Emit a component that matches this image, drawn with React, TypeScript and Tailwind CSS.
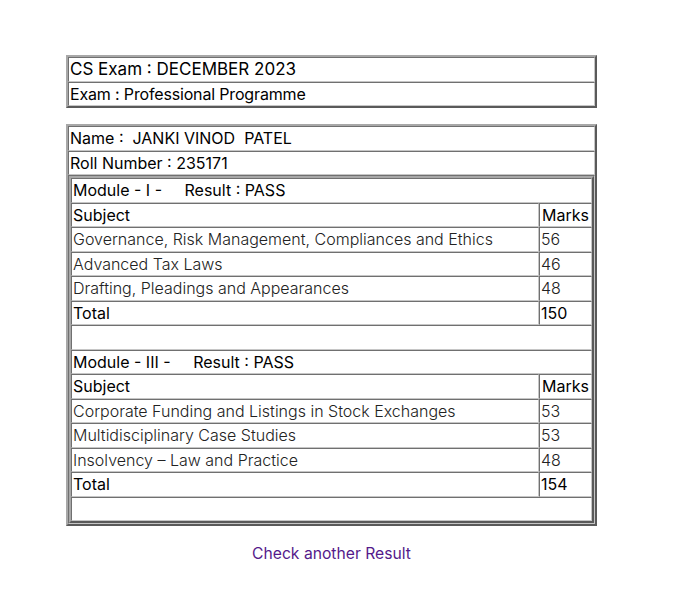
const cell =
	"border border-t-[#707070] border-l-[#707070] border-r-[#c6c6c6] border-b-[#c6c6c6] p-0 px-[1px] text-left align-middle leading-[22.5px]";
const tbl =
	"border-separate border-spacing-0 border-2 border-t-[#a8a8a8] border-l-[#a8a8a8] border-r-[#5a5a5a] border-b-[#5a5a5a]";

type Row = { subject: string; marks: string };

const moduleOne: Row[] = [
	{ subject: "Governance, Risk Management, Compliances and Ethics", marks: "56" },
	{ subject: "Advanced Tax Laws", marks: "46" },
	{ subject: "Drafting, Pleadings and Appearances", marks: "48" },
];

const moduleThree: Row[] = [
	{ subject: "Corporate Funding and Listings in Stock Exchanges", marks: "53" },
	{ subject: "Multidisciplinary Case Studies", marks: "53" },
	{ subject: "Insolvency \u2013 Law and Practice", marks: "48" },
];

function ModuleRows({ title, rows, total }: { title: string; rows: Row[]; total: string }) {
	return (
		<>
			<tr>
				<td colSpan={2} className={cell}>
					{title}
					{"\u00a0\u00a0\u00a0\u00a0\u00a0"}Result : PASS
				</td>
			</tr>
			<tr>
				<td className={cell}>Subject</td>
				<td className="border border-t-[#707070] border-l-[#707070] border-r-[#c6c6c6] border-b-[#c6c6c6] p-0 px-[1px] text-center leading-[22.5px] w-[53px]">
					Marks
				</td>
			</tr>
			{rows.map((r) => (
				<tr key={r.subject}>
					<td className={`${cell} font-light text-[#222]`}>{r.subject}</td>
					<td className={`${cell} font-light text-[#222]`}>{r.marks}</td>
				</tr>
			))}
			<tr>
				<td className={cell}>Total</td>
				<td className={cell}>{total}</td>
			</tr>
			<tr>
				<td colSpan={2} className={cell}>
					{"\u00a0"}
				</td>
			</tr>
		</>
	);
}

export default function App() {
	return (
		<div className="min-h-[605px] bg-white text-black text-base font-['Inter',sans-serif] pt-[55px] pl-[66px]">
			<div className="w-[531px]">
				<table className={`${tbl} w-full`}>
					<tbody>
						<tr>
							<td className={`${cell} text-[17px]`}>CS Exam : DECEMBER 2023</td>
						</tr>
						<tr>
							<td className={`${cell} tracking-[-0.01em]`}>Exam : Professional Programme</td>
						</tr>
					</tbody>
				</table>

				<table className={`${tbl} w-full mt-[16px]`}>
					<tbody>
						<tr>
							<td className={cell}>Name :{"\u00a0\u00a0"}JANKI VINOD{"\u00a0\u00a0"}PATEL</td>
						</tr>
						<tr>
							<td className={cell}>Roll Number : 235171</td>
						</tr>
						<tr>
							<td className="border border-t-[#707070] border-l-[#707070] border-r-[#c6c6c6] border-b-[#c6c6c6] p-0">
								<table className={`${tbl} w-full`}>
									<tbody>
										<ModuleRows title="Module - I -" rows={moduleOne} total="150" />
										<ModuleRows title="Module - III -" rows={moduleThree} total="154" />
									</tbody>
								</table>
							</td>
						</tr>
					</tbody>
				</table>

				<div className="mt-[15px] text-center">
					<a href="#" className="text-[#551a8b] text-[15.7px]">
						Check another Result
					</a>
				</div>
			</div>
		</div>
	);
}
